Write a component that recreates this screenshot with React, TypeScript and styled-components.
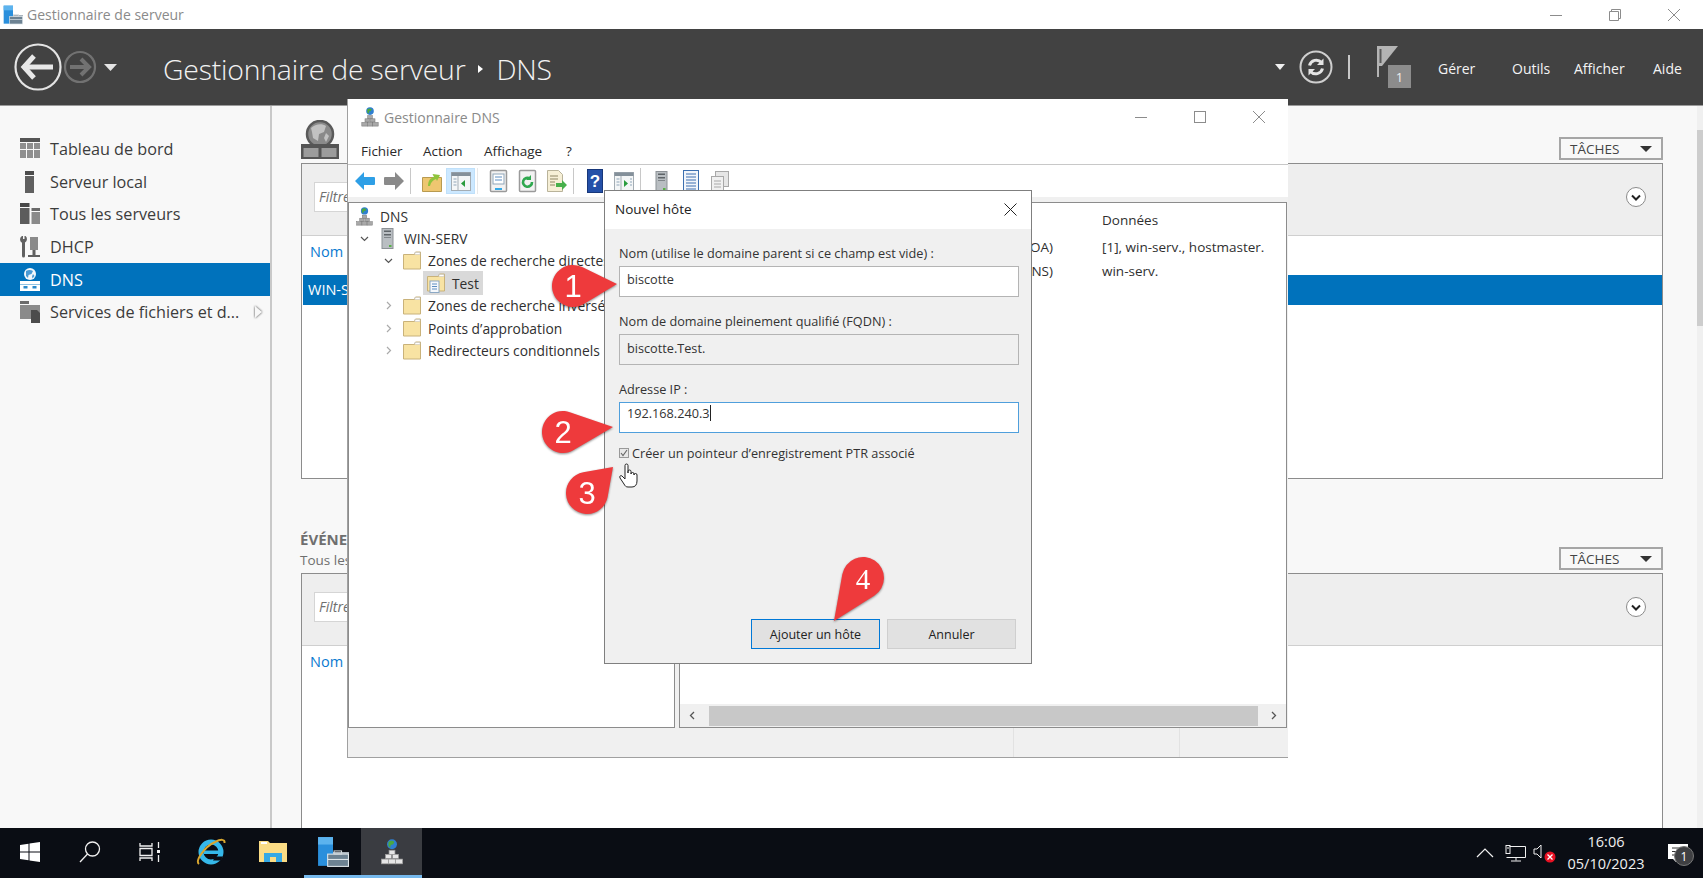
import React from 'react';
import styled, { createGlobalStyle } from 'styled-components';

const FONT = `"Open Sans", "Noto Sans", "Liberation Sans", sans-serif`;

const GlobalStyle = createGlobalStyle`
  html, body {
    margin: 0;
    padding: 0;
    overflow: hidden;
  }
  body {
    font-family: ${FONT};
    background: #f8f8f8;
  }
  * {
    box-sizing: border-box;
  }
`;

const Desktop = styled.div`
  position: relative;
  width: 1703px;
  height: 878px;
  display: flex;
  flex-direction: column;
  overflow: hidden;
`;

/* ---------- icons ---------- */

const ServerManagerIcon: React.FC<{ size: number }> = ({ size }) => (
  <svg width={size} height={size} viewBox="0 0 30 30">
    <rect x="1" y="1" width="14" height="27" fill="#2a8fdc" />
    <rect x="1" y="1" width="14" height="7" fill="#5cb3ee" />
    <rect x="15" y="15" width="15" height="2" fill="#aab4bc" />
    <rect x="10" y="17" width="19.5" height="11.5" fill="#6d8292" stroke="#dfe6ea" />
    <rect x="16" y="14" width="7" height="3" fill="none" stroke="#cfd6da" />
    <rect x="10" y="21.5" width="19.5" height="1" fill="#dfe6ea" />
  </svg>
);

const DnsIcon: React.FC<{ size: number; light?: boolean }> = ({ size, light }) => {
  const block = light ? '#e6e6e6' : '#a9a9a9';
  const edge = light ? '#9a9a9a' : '#777';
  return (
    <svg width={size} height={size} viewBox="0 0 20 22">
      <circle cx="10" cy="4.5" r="4.2" fill="#2f7fd0" />
      <path d="M7 2.5c2-1.5 4-1 5 0l-1 2-2 .5-.5 2.5-1.5-1.5z" fill="#4ba83f" />
      <rect x="7.5" y="9.5" width="5" height="3.5" fill={block} stroke={edge} strokeWidth="0.6" />
      <rect x="4.5" y="13" width="5" height="3.5" fill={block} stroke={edge} strokeWidth="0.6" />
      <rect x="10.5" y="13" width="5" height="3.5" fill={block} stroke={edge} strokeWidth="0.6" />
      <rect x="1" y="17" width="6" height="4" fill={block} stroke={edge} strokeWidth="0.6" />
      <rect x="7" y="17" width="6" height="4" fill={block} stroke={edge} strokeWidth="0.6" />
      <rect x="13" y="17" width="6" height="4" fill={block} stroke={edge} strokeWidth="0.6" />
    </svg>
  );
};

const FolderIcon: React.FC<{ doc?: boolean }> = ({ doc }) => (
  <svg width="18" height="20" viewBox="0 0 18 20">
    <path d="M.5 3.5h11l1-2.5h5v17H.5z" fill="#f8e3a3" stroke="#c9b27a" />
    <rect x="12" y="1.5" width="5" height="2" fill="#fff" stroke="#bcbcbc" strokeWidth="0.5" />
    {doc && (
      <g>
        <rect x="3" y="8" width="9" height="11.5" fill="#f5f8fc" stroke="#8ba8c4" />
        <path d="M5 11h5M5 13.5h5M5 16h5" stroke="#5c8ec2" />
      </g>
    )}
  </svg>
);

const ServerTower: React.FC = () => (
  <svg width="14" height="21" viewBox="0 0 14 21">
    <rect x="1" y="0.5" width="11" height="20" fill="#b9bec2" stroke="#8c9196" />
    <rect x="3" y="2.5" width="7" height="1.5" fill="#5f6468" />
    <rect x="3" y="6" width="7" height="1.5" fill="#5f6468" />
    <rect x="3" y="9" width="7" height="1" fill="#80868a" />
    <rect x="8" y="17" width="2.5" height="2" fill="#58b047" />
  </svg>
);

const Chevron: React.FC<{ open?: boolean }> = ({ open }) => (
  <svg width="9" height="9" viewBox="0 0 9 9">
    <path
      d={open ? 'M1 3l3.5 3.5L8 3' : 'M3 1l3.5 3.5L3 8'}
      fill="none"
      stroke={open ? '#555' : '#aaa'}
      strokeWidth="1.2"
    />
  </svg>
);

const WinGlyph: React.FC<{ kind: 'min' | 'max' | 'restore' | 'close'; color?: string }> = ({
  kind,
  color = '#8c8c8c',
}) => (
  <svg width="14" height="14" viewBox="0 0 14 14" fill="none" stroke={color} strokeWidth="1">
    {kind === 'min' && <path d="M1 7.5h12" />}
    {kind === 'max' && <rect x="1.5" y="1.5" width="11" height="11" />}
    {kind === 'restore' && <path d="M1.5 3.5h9v9h-9zM3.5 3.5v-2h9v9h-2" />}
    {kind === 'close' && <path d="M1 1l12 12M13 1L1 13" />}
  </svg>
);

const TILE_GLYPHS: Record<string, React.ReactNode> = {
  dashboard: (
    <g fill="#8f8f8f">
      <rect x="0" y="0" width="20" height="4" fill="#555" />
      <rect x="0" y="5" width="6" height="6" />
      <rect x="7" y="5" width="6" height="6" />
      <rect x="14" y="5" width="6" height="6" />
      <rect x="0" y="12" width="6" height="8" />
      <rect x="7" y="12" width="6" height="8" />
      <rect x="14" y="12" width="6" height="8" />
    </g>
  ),
  local: (
    <g fill="#606060">
      <rect x="5" y="0" width="9" height="4" fill="#4c4c4c" />
      <rect x="5" y="5" width="9" height="17" />
    </g>
  ),
  all: (
    <g fill="#5c5c5c">
      <rect x="0" y="0" width="9.5" height="4" fill="#484848" />
      <rect x="0" y="5" width="9.5" height="16" />
      <rect x="11.5" y="5" width="8.5" height="3" fill="#6a6a6a" />
      <rect x="11.5" y="9" width="8.5" height="12" fill="#8a8a8a" />
    </g>
  ),
  dhcp: (
    <g fill="#606060">
      <path d="M2 0h1v3h1.500V0h1a4 4 0 0 1-.5 6.500H5V20a1.500 1.500 0 0 1-3 0V6.500h-.5A4 4 0 0 1 2 0z" />
      <rect x="10" y="1" width="8" height="13" fill="#8a8a8a" />
      <rect x="12.500" y="14" width="3" height="5" />
      <rect x="8" y="19" width="12" height="2" />
    </g>
  ),
  files: (
    <g fill="#8a8a8a">
      <rect x="0" y="0" width="9" height="3" fill="#6c6c6c" />
      <rect x="0" y="4" width="20" height="14" />
      <path d="M11 9h6l3 3v10h-9z" fill="#4c4c4c" />
    </g>
  ),
};

const NavGlyph: React.FC<{ name: string }> = ({ name }) => (
  <svg width="20" height="22" viewBox="0 0 20 22">
    {TILE_GLYPHS[name]}
  </svg>
);

const DnsNavGlyph: React.FC = () => (
  <svg width="20" height="23" viewBox="0 0 20 23">
    <circle cx="10" cy="6" r="6" fill="#f2f7fb" />
    <path d="M6 3c2-1.500 5-1.500 7 0l-1.500 3-3 1-.5 3-2-2z" fill="#4a9ad4" />
    <path d="M13 6l1.500 2-2 2.500-.5-2z" fill="#4a9ad4" />
    <rect x="0" y="13" width="20" height="10" fill="#fff" />
    <rect x="0" y="16" width="20" height="1" fill="#8fc2e4" />
    <rect x="3.500" y="18" width="4" height="2.500" fill="#2b8acb" />
    <rect x="12.500" y="18" width="4" height="2.500" fill="#2b8acb" />
  </svg>
);

/* ---------- top of the server manager ---------- */

const TitleBar = styled.div`
  height: 29px;
  background: #fff;
  display: flex;
  align-items: center;
  padding-left: 3px;
  flex-shrink: 0;
`;

const TitleText = styled.span`
  margin-left: 4px;
  font-size: 14px;
  color: #8a8a8a;
`;

const WindowButtons = styled.div`
  margin-left: auto;
  display: flex;
`;

const WindowButton = styled.div`
  width: 59px;
  height: 29px;
  display: flex;
  align-items: center;
  justify-content: center;
`;

const HeaderBar = styled.div`
  height: 77px;
  background: #424242;
  border-bottom: 1px solid #9a9a9a;
  display: flex;
  align-items: center;
  padding-left: 13px;
  color: #fff;
  flex-shrink: 0;
`;

const Breadcrumb = styled.div`
  margin-left: 46px;
  padding-top: 3px;
  display: flex;
  align-items: center;
  font-size: 28.4px;
  font-weight: 300;
  color: #f2f2f2;
  letter-spacing: -0.2px;
`;

const Crumb = styled.span`
  margin: 0 14px 0 12px;
  width: 0;
  height: 0;
  border-left: 5px solid #fff;
  border-top: 4.5px solid transparent;
  border-bottom: 4.5px solid transparent;
`;

const HeaderTools = styled.div`
  margin-left: auto;
  display: flex;
  align-items: center;
`;

const DropCaret = styled.span`
  width: 0;
  height: 0;
  border-top: 6px solid #f0f0f0;
  border-left: 5.5px solid transparent;
  border-right: 5.5px solid transparent;
`;

const RefreshCircle = styled.svg`
  margin-left: 13px;
`;

const HeaderPipe = styled.span`
  width: 2px;
  height: 24px;
  background: #c8c8c8;
  margin: 0 26px 0 14px;
`;

const FlagBox = styled.div`
  position: relative;
  width: 36px;
  height: 44px;
`;

const FlagBadge = styled.span`
  position: absolute;
  left: 12px;
  top: 20px;
  width: 23px;
  height: 23px;
  background: #8c8c8c;
  color: #eee;
  font-size: 13px;
  display: flex;
  align-items: center;
  justify-content: center;
`;

const HeaderMenu = styled.nav`
  display: flex;
  align-items: center;
  margin-left: 26px;
  padding-top: 2px;
  font-size: 14px;
  color: #f4f4f4;
`;

const HeaderMenuItem = styled.span<{ $width: number }>`
  width: ${({ $width }) => $width}px;
`;

/* ---------- body: sidebar and tiles ---------- */

const Body = styled.div`
  flex: 1;
  display: flex;
  min-height: 0;
`;

const Sidebar = styled.aside`
  width: 272px;
  flex-shrink: 0;
  background: #f8f8f8;
  border-right: 2px solid #c9c9c9;
  padding-top: 27px;
`;

const NavItem = styled.div<{ $active?: boolean }>`
  height: 32.6px;
  display: flex;
  align-items: center;
  padding-left: 20px;
  gap: 10px;
  font-size: 16.2px;
  color: ${({ $active }) => ($active ? '#fff' : '#3c3c3c')};
  background: ${({ $active }) => ($active ? '#0072bc' : 'transparent')};
`;

const NavArrow = styled.span`
  margin-left: 6px;
  width: 0;
  height: 0;
  border-left: 7px solid #f8f8f8;
  border-top: 6px solid transparent;
  border-bottom: 6px solid transparent;
  filter: drop-shadow(0 0 1px #333);
`;

const Main = styled.main`
  flex: 1;
  display: flex;
  min-width: 0;
  background: #f8f8f8;
`;

const MainContent = styled.div`
  flex: 1;
  min-width: 0;
  padding: 0 34px 0 29px;
  display: flex;
  flex-direction: column;
`;

const ScrollTrack = styled.div`
  width: 6px;
  background: #f0f0f0;
  padding-top: 24px;
`;

const ScrollThumb = styled.div`
  height: 196px;
  background: #cdcdcd;
`;

const SectionHead = styled.div<{ $height: number }>`
  height: ${({ $height }) => $height}px;
  display: flex;
  align-items: flex-end;
  justify-content: space-between;
  flex-shrink: 0;
`;

const RoleIcon = styled.svg`
  margin-bottom: 4px;
`;

const EventTitle = styled.div`
  font-size: 15px;
  font-weight: 700;
  color: #6f6f6f;
  margin: 0 0 4px -1px;
  line-height: 18px;
`;

const EventSub = styled.div`
  margin-top: 3px;
  font-size: 13.5px;
  font-weight: 400;
  color: #6f6f6f;
`;

const TasksButton = styled.div`
  width: 104px;
  height: 23px;
  margin-bottom: 3px;
  border: 2px solid #a6a6a6;
  background: #f8f8f8;
  display: flex;
  align-items: center;
  justify-content: space-between;
  padding: 0 9px;
  font-size: 13.5px;
  color: #444;
`;

const TasksCaret = styled.span`
  width: 0;
  height: 0;
  border-top: 6px solid #333;
  border-left: 6px solid transparent;
  border-right: 6px solid transparent;
`;

const Tile = styled.section<{ $height?: number }>`
  border: 1px solid #8c8c8c;
  border-bottom-width: ${({ $height }) => ($height ? '1px' : '0')};
  background: #fff;
  height: ${({ $height }) => ($height ? `${$height}px` : 'auto')};
  flex: ${({ $height }) => ($height ? '0 0 auto' : '1')};
`;

const TileHeader = styled.div`
  height: 72px;
  background: #eeeeee;
  border-bottom: 1px solid #cfcfcf;
  display: flex;
  align-items: center;
  justify-content: space-between;
  padding: 0 16px 5px 12px;
`;

const FilterBox = styled.div`
  width: 200px;
  height: 30px;
  background: #fff;
  border: 1px solid #d5d5d5;
  padding: 0 4px;
  line-height: 28px;
  font-size: 14px;
  font-style: italic;
  color: #6f6f6f;
`;

const ColumnHead = styled.div`
  height: 39px;
  padding-left: 8px;
  line-height: 32px;
  font-size: 14.5px;
  color: #0a7ad0;
`;

const SelectedRow = styled.div`
  height: 30px;
  margin-left: 1px;
  padding-left: 5px;
  background: #0072bc;
  color: #fff;
  font-size: 14.5px;
  line-height: 30px;
`;

const ExpandCircle: React.FC = () => (
  <svg width="20" height="20" viewBox="0 0 20 20">
    <circle cx="10" cy="10" r="9.5" fill="#fff" stroke="#8a8a8a" />
    <path d="M6 8.5l4 4 4-4" fill="none" stroke="#222" strokeWidth="2" />
  </svg>
);

/* ---------- DNS manager window ---------- */

const DnsWindow = styled.div`
  position: absolute;
  left: 347px;
  top: 99px;
  width: 941px;
  height: 659px;
  display: flex;
  flex-direction: column;
  background: #f0f0f0;
  border-bottom: 1px solid #a0a0a0;
  border-left: 1px solid #a0a0a0;
`;

const DnsTitle = styled.div`
  height: 38px;
  background: #fff;
  display: flex;
  align-items: center;
  padding: 0 0 2px 12px;
  flex-shrink: 0;
`;

const DnsTitleText = styled.span`
  margin-left: 4px;
  font-size: 14px;
  color: #8a8a8a;
`;

const DnsWindowButtons = styled.div`
  margin-left: auto;
  display: flex;
`;

const DnsWindowButton = styled.div`
  width: 59px;
  height: 36px;
  display: flex;
  align-items: center;
  justify-content: center;
`;

const MenuBar = styled.div`
  height: 28px;
  background: #fff;
  border-bottom: 1px solid #c8c8c8;
  display: flex;
  align-items: center;
  padding-left: 13px;
  font-size: 13.5px;
  color: #2a2a2a;
  flex-shrink: 0;
`;

const MenuItem = styled.span<{ $width: number }>`
  width: ${({ $width }) => $width}px;
`;

const Toolbar = styled.div`
  height: 32px;
  background: #fff;
  display: flex;
  align-items: center;
  padding-left: 2px;
  flex-shrink: 0;
`;

const ToolGap = styled.div`
  height: 5px;
  background: #f0f0f0;
  flex-shrink: 0;
`;

const ToolButton = styled.div<{ $active?: boolean }>`
  width: 29px;
  height: 26px;
  display: flex;
  align-items: center;
  justify-content: center;
  background: ${({ $active }) => ($active ? '#cce8ff' : 'transparent')};
  border: 1px solid ${({ $active }) => ($active ? '#bfe0fa' : 'transparent')};
`;

const ToolSep = styled.span<{ $faint?: boolean }>`
  width: 1px;
  height: 26px;
  background: ${({ $faint }) => ($faint ? '#e8e8e8' : '#c8c8c8')};
  margin: 0 6px 0 2px;
`;

const HelpMark = styled.text`
  font-family: "Liberation Sans", sans-serif;
  font-size: 17px;
  font-weight: 700;
  fill: #fff;
  text-anchor: middle;
`;

const Panes = styled.div`
  flex: 1;
  display: flex;
  gap: 4px;
  min-height: 0;
  padding-right: 1px;
`;

const TreePane = styled.div`
  width: 327px;
  background: #fff;
  border: 1px solid #8c8c8c;
  padding-top: 2px;
  font-size: 13.8px;
  color: #2f2f2f;
  overflow: hidden;
`;

const TreeRow = styled.div<{ $indent: number }>`
  height: 22.4px;
  display: flex;
  align-items: center;
  padding-left: ${({ $indent }) => $indent}px;
  white-space: nowrap;
`;

const TreeChevron = styled.span`
  width: 18px;
  flex-shrink: 0;
  display: flex;
  justify-content: center;
`;

const TreeNode = styled.span<{ $selected?: boolean }>`
  margin-left: 2px;
  padding: 0 4px;
  height: 24px;
  display: flex;
  align-items: center;
  gap: 7px;
  background: ${({ $selected }) => ($selected ? '#d9d9d9' : 'transparent')};
`;

const TreeIconSlot = styled.span`
  width: 18px;
  flex-shrink: 0;
  display: flex;
  justify-content: center;
`;

const ListPane = styled.div`
  flex: 1;
  min-width: 0;
  background: #fff;
  border: 1px solid #8c8c8c;
  display: flex;
  flex-direction: column;
`;

const ListBody = styled.div`
  flex: 1;
  padding-top: 5px;
  font-size: 13.5px;
  color: #2f2f2f;
`;

const ListRow = styled.div<{ $header?: boolean }>`
  height: 24px;
  margin-bottom: ${({ $header }) => ($header ? '3px' : '0')};
  display: flex;
  align-items: center;
  white-space: nowrap;
`;

const TypeCell = styled.span`
  width: 373px;
  text-align: right;
`;

const DataCell = styled.span`
  margin-left: 49px;
`;

const HScroll = styled.div`
  height: 23px;
  background: #f0f0f0;
  display: flex;
  align-items: center;
  justify-content: space-between;
  padding: 0 9px;
`;

const HThumb = styled.div`
  flex: 1;
  height: 20px;
  margin: 0 13px 0 14px;
  background: #c8c8c8;
`;

const StatusBar = styled.div`
  height: 29px;
  display: flex;
  justify-content: flex-end;
  flex-shrink: 0;
`;

const StatusCell = styled.div<{ $width: number }>`
  width: ${({ $width }) => $width}px;
  border-left: 1px solid #e2e2e2;
`;

/* ---------- new host dialog ---------- */

const Dialog = styled.div`
  position: absolute;
  left: 604px;
  top: 190px;
  width: 428px;
  height: 474px;
  background: #f0f0f0;
  border: 1px solid #7f7f7f;
  display: flex;
  flex-direction: column;
`;

const DialogHeader = styled.div`
  height: 38px;
  background: #fff;
  display: flex;
  align-items: center;
  justify-content: space-between;
  padding: 0 14px 2px 10px;
  font-size: 13.5px;
  color: #222;
  flex-shrink: 0;
`;

const DialogBody = styled.div`
  flex: 1;
  display: flex;
  flex-direction: column;
  padding: 16px 12px 14px 14px;
`;

const FieldLabel = styled.div`
  height: 16px;
  line-height: 16px;
  font-size: 12.7px;
  color: #333;
  white-space: nowrap;
`;

const FieldInput = styled.div<{ $state?: 'focus' | 'readonly' }>`
  height: 31px;
  margin: 5px 0 16px;
  padding: ${({ $state }) => ($state === 'readonly' ? '5px' : $state === 'focus' ? '2px' : '4px')} 7px;
  font-size: 12.7px;
  line-height: 16px;
  color: #333;
  background: ${({ $state }) => ($state === 'readonly' ? '#f0f0f0' : '#fff')};
  border: 1px solid ${({ $state }) => ($state === 'focus' ? '#4f9fdc' : '#b4b4b4')};
`;

const Caret = styled.span`
  display: inline-block;
  width: 1px;
  height: 16px;
  background: #222;
  vertical-align: -3px;
`;

const CheckRow = styled.div`
  margin-top: -5px;
  display: flex;
  align-items: center;
  gap: 3px;
  font-size: 12.7px;
  color: #333;
`;

const CheckBox = styled.span`
  width: 10px;
  height: 10px;
  border: 1px solid #999;
  background: #e8e8e8;
  display: flex;
`;

const DialogFooter = styled.div`
  margin-top: auto;
  display: flex;
  justify-content: flex-end;
  gap: 7px;
  padding-right: 3px;
`;

const DialogButton = styled.div<{ $primary?: boolean }>`
  width: 129px;
  height: 30px;
  display: flex;
  align-items: center;
  justify-content: center;
  background: #e1e1e1;
  border: 1px solid ${({ $primary }) => ($primary ? '#0078d7' : '#cfcfcf')};
  font-size: 12.5px;
  color: #222;
`;

/* ---------- callouts ---------- */

const PinSvg = styled.svg<{ $left: number; $top: number }>`
  position: absolute;
  left: ${({ $left }) => $left}px;
  top: ${({ $top }) => $top}px;
  overflow: visible;
  filter: drop-shadow(0 1px 1px rgba(0, 0, 0, 0.45));
`;

const PinNumber = styled.text<{ $serif?: boolean }>`
  font-family: ${({ $serif }) => ($serif ? '"Liberation Serif", serif' : '"Liberation Sans", sans-serif')};
  font-size: ${({ $serif }) => ($serif ? 29 : 31)}px;
  fill: #fff;
  text-anchor: middle;
`;

const Callout: React.FC<{
  label: string;
  cx: number;
  cy: number;
  tipX: number;
  tipY: number;
  serif?: boolean;
}> = ({ label, cx, cy, tipX, tipY, serif }) => {
  const r = 21;
  const dx = tipX - cx;
  const dy = tipY - cy;
  const d = Math.hypot(dx, dy);
  const base = Math.atan2(dy, dx);
  const a = Math.acos(r / d);
  const p1 = [r * Math.cos(base - a), r * Math.sin(base - a)];
  const p2 = [r * Math.cos(base + a), r * Math.sin(base + a)];
  const path = `M${dx} ${dy}L${p2[0]} ${p2[1]}A${r} ${r} 0 1 1 ${p1[0]} ${p1[1]}Z`;
  return (
    <PinSvg $left={cx} $top={cy} width="1" height="1">
      <path d={path} fill="#ee3a3c" />
      <PinNumber x="0" y="10.5" $serif={serif}>
        {label}
      </PinNumber>
    </PinSvg>
  );
};

const HandCursor = styled.svg`
  position: absolute;
  left: 619px;
  top: 463px;
`;

/* ---------- taskbar ---------- */

const Taskbar = styled.footer`
  position: relative;
  z-index: 5;
  height: 50px;
  background: #0a0d14;
  display: flex;
  align-items: stretch;
  flex-shrink: 0;
  color: #f0f0f0;
`;

const TaskSlot = styled.div<{ $width: number; $pressed?: boolean; $running?: boolean }>`
  width: ${({ $width }) => $width}px;
  display: flex;
  align-items: center;
  justify-content: center;
  background: ${({ $pressed }) => ($pressed ? '#3a3c41' : 'transparent')};
  border-bottom: 3px solid ${({ $running }) => ($running ? '#76b9ed' : 'transparent')};
`;

const Tray = styled.div`
  margin-left: auto;
  display: flex;
  align-items: center;
`;

const TrayIcon = styled.div<{ $width: number }>`
  width: ${({ $width }) => $width}px;
  display: flex;
  justify-content: center;
  position: relative;
`;

const Clock = styled.div`
  width: 94px;
  text-align: center;
  font-size: 14.5px;
  line-height: 22px;
`;

const NotifyBadge = styled.span`
  position: absolute;
  left: 21px;
  top: 2px;
  width: 20px;
  height: 20px;
  border-radius: 50%;
  background: #3f4043;
  border: 1px solid #777;
  color: #fff;
  font-size: 12px;
  display: flex;
  align-items: center;
  justify-content: center;
`;

/* ---------- toolbar icon set ---------- */

const ArrowTool: React.FC<{ color: string; flip?: boolean }> = ({ color, flip }) => (
  <svg width="22" height="20" viewBox="0 0 22 20">
    <g transform={flip ? 'matrix(-1 0 0 1 22 0)' : undefined}>
      <path d="M1 10l9-9v5h10a1 1 0 0 1 1 1v6a1 1 0 0 1-1 1H10v5z" fill={color} />
    </g>
  </svg>
);

const PageTool: React.FC<{ children?: React.ReactNode }> = ({ children }) => (
  <svg width="20" height="24" viewBox="0 0 20 24">
    <rect x="1.5" y="1.5" width="16" height="21" rx="1" fill="#f2f2f2" stroke="#9a9a9a" strokeWidth="1.5" />
    {children}
  </svg>
);

const SplitTool: React.FC<{ right?: boolean }> = ({ right }) => (
  <svg width="20" height="19" viewBox="0 0 20 19">
    <rect x="0.5" y="0.5" width="19" height="18" fill="#f4f6f7" stroke="#a4adb4" />
    <rect x="0.5" y="0.5" width="19" height="3.500" fill="#84909a" />
    <path d="M7 4v14" stroke="#a4adb4" />
    {right ? (
      <path d="M10 8v7l4-3.500z" fill="#2a9c3e" />
    ) : (
      <path d="M14 8v7l-4-3.500z" fill="#2a9c3e" />
    )}
    <path d="M2.500 7h3M2.500 10h3M2.500 13h3" stroke="#8fa5b8" />
    {right && <path d="M16 7h2M16 10h2M16 13h2" stroke="#8fa5b8" />}
  </svg>
);

const App: React.FC = () => (
  <Desktop>
    <GlobalStyle />
    <TitleBar>
      <ServerManagerIcon size={20} />
      <TitleText>Gestionnaire de serveur</TitleText>
      <WindowButtons>
        <WindowButton>
          <WinGlyph kind="min" />
        </WindowButton>
        <WindowButton>
          <WinGlyph kind="restore" />
        </WindowButton>
        <WindowButton>
          <WinGlyph kind="close" />
        </WindowButton>
      </WindowButtons>
    </TitleBar>

    <HeaderBar>
      <svg width="104" height="52" viewBox="0 0 104 52">
        <circle cx="25" cy="26" r="22.500" fill="none" stroke="#e4e4e4" strokeWidth="2.200" />
        <path d="M10 26h30" stroke="#e8e8e8" strokeWidth="5" />
        <path d="M21 15L11 26l10 11" fill="none" stroke="#e8e8e8" strokeWidth="5" />
        <circle cx="67" cy="26" r="15" fill="none" stroke="#727272" strokeWidth="2.200" />
        <path d="M57 26h18" stroke="#727272" strokeWidth="4" />
        <path d="M68 18l8 8-8 8" fill="none" stroke="#727272" strokeWidth="4" />
        <path d="M91 23h13l-6.500 7z" fill="#e4e4e4" />
      </svg>
      <Breadcrumb>
        Gestionnaire de serveur
        <Crumb />
        DNS
      </Breadcrumb>
      <HeaderTools>
        <DropCaret />
        <RefreshCircle width="36" height="36" viewBox="0 0 36 36">
          <circle cx="18" cy="18" r="15.500" fill="none" stroke="#cfcfcf" strokeWidth="2" />
          <path d="M11.500 16.500a7 7 0 0 1 12-3" fill="none" stroke="#e4e4e4" strokeWidth="3" />
          <path d="M25.500 9.500v6.500h-6.500z" fill="#e4e4e4" />
          <path d="M24.500 19.500a7 7 0 0 1-12 3" fill="none" stroke="#e4e4e4" strokeWidth="3" />
          <path d="M10.500 26.500V20h6.500z" fill="#e4e4e4" />
        </RefreshCircle>
        <HeaderPipe />
        <FlagBox>
          <svg width="24" height="32" viewBox="0 0 24 32">
            <path d="M1 1h2v31H1z" fill="#b4b4b4" />
            <path d="M3 1h19L6 21H3z" fill="#b4b4b4" />
            <path d="M3.500 4h2v14h-2z" fill="#5a5a5a" />
          </svg>
          <FlagBadge>1</FlagBadge>
        </FlagBox>
        <HeaderMenu>
          <HeaderMenuItem $width={74}>Gérer</HeaderMenuItem>
          <HeaderMenuItem $width={62}>Outils</HeaderMenuItem>
          <HeaderMenuItem $width={79}>Afficher</HeaderMenuItem>
          <HeaderMenuItem $width={50}>Aide</HeaderMenuItem>
        </HeaderMenu>
      </HeaderTools>
    </HeaderBar>

    <Body>
      <Sidebar>
        <NavItem>
          <NavGlyph name="dashboard" />
          Tableau de bord
        </NavItem>
        <NavItem>
          <NavGlyph name="local" />
          Serveur local
        </NavItem>
        <NavItem>
          <NavGlyph name="all" />
          Tous les serveurs
        </NavItem>
        <NavItem>
          <NavGlyph name="dhcp" />
          DHCP
        </NavItem>
        <NavItem $active>
          <DnsNavGlyph />
          DNS
        </NavItem>
        <NavItem>
          <NavGlyph name="files" />
          Services de fichiers et d...
          <NavArrow />
        </NavItem>
      </Sidebar>
      <Main>
        <MainContent>
          <SectionHead $height={57}>
            <RoleIcon width="38" height="39" viewBox="0 0 38 39">
              <circle cx="19" cy="14" r="13" fill="#8a8a8a" stroke="#5a5a5a" strokeWidth="2.500" />
              <path d="M10 8c4-4 11-5 15-2l-2 6-5 2-1 7-5-3-1-6z" fill="#c2c2c2" />
              <path d="M25 13l3 3-3 6-2-4z" fill="#c2c2c2" />
              <rect x="0" y="24" width="38" height="15" fill="#555" />
              <rect x="2.500" y="28" width="15" height="9" fill="#9c9c9c" />
              <rect x="20.500" y="28" width="15" height="9" fill="#9c9c9c" />
            </RoleIcon>
            <TasksButton>
              TÂCHES
              <TasksCaret />
            </TasksButton>
          </SectionHead>
          <Tile $height={316}>
            <TileHeader>
              <FilterBox>Filtre</FilterBox>
              <ExpandCircle />
            </TileHeader>
            <ColumnHead>Nom</ColumnHead>
            <SelectedRow>WIN-SERV</SelectedRow>
          </Tile>
          <SectionHead $height={94}>
            <EventTitle>
              ÉVÉNEMENTS
              <EventSub>Tous les événements</EventSub>
            </EventTitle>
            <TasksButton>
              TÂCHES
              <TasksCaret />
            </TasksButton>
          </SectionHead>
          <Tile>
            <TileHeader>
              <FilterBox>Filtre</FilterBox>
              <ExpandCircle />
            </TileHeader>
            <ColumnHead>Nom</ColumnHead>
          </Tile>
        </MainContent>
        <ScrollTrack>
          <ScrollThumb />
        </ScrollTrack>
      </Main>
    </Body>

    <Taskbar>
      <TaskSlot $width={60}>
        <svg width="20" height="20" viewBox="0 0 20 20" fill="#fff">
          <path d="M0 3l8.500-1.200v7.700H0zM9.500 1.600L20 0v9.500H9.500zM0 10.500h8.500v7.700L0 17zM9.500 10.500H20V20L9.500 18.400z" />
        </svg>
      </TaskSlot>
      <TaskSlot $width={60}>
        <svg width="22" height="22" viewBox="0 0 22 22" fill="none" stroke="#f0f0f0" strokeWidth="1.300">
          <circle cx="13.500" cy="8" r="7" />
          <path d="M8.500 13L1 21" />
        </svg>
      </TaskSlot>
      <TaskSlot $width={60}>
        <svg width="22" height="20" viewBox="0 0 22 20" fill="none" stroke="#f0f0f0" strokeWidth="1.300">
          <path d="M1 1v3h12V1M1 19v-3h12v3M1 6.500h12v7H1zM19.500 0v6M19.500 13v7" />
          <rect x="18" y="8" width="3" height="3" fill="#f0f0f0" stroke="none" />
        </svg>
      </TaskSlot>
      <TaskSlot $width={62}>
        <svg width="30" height="30" viewBox="0 0 30 30">
          <circle cx="15" cy="15" r="10" fill="none" stroke="#35b8ea" strokeWidth="5" />
          <rect x="8" y="13.500" width="15" height="3.500" fill="#35b8ea" />
          <path d="M19 19.500l8 0-2 4-8 0z" fill="#0a0d14" />
          <path
            d="M3 27c-4-3 5-17 16-22 6-3 10-3 9.500 1"
            fill="none"
            stroke="#d9a730"
            strokeWidth="2"
          />
        </svg>
      </TaskSlot>
      <TaskSlot $width={62}>
        <svg width="28" height="24" viewBox="0 0 28 24">
          <path d="M0 1h9l2 2h17v19H0z" fill="#fbdc85" />
          <path d="M2 2h6v2H2z" fill="#fff" />
          <path d="M5 22v-9h18v9h-6v-5h-6v5z" fill="#35a9e6" />
        </svg>
      </TaskSlot>
      <TaskSlot $width={57} $running>
        <ServerManagerIcon size={32} />
      </TaskSlot>
      <TaskSlot $width={61} $pressed $running>
        <DnsIcon size={26} light />
      </TaskSlot>
      <Tray>
        <TrayIcon $width={30}>
          <svg width="18" height="10" viewBox="0 0 18 10" fill="none" stroke="#f0f0f0" strokeWidth="1.200">
            <path d="M1 9l8-8 8 8" />
          </svg>
        </TrayIcon>
        <TrayIcon $width={30}>
          <svg width="21" height="17" viewBox="0 0 21 17" fill="none" stroke="#f0f0f0">
            <path d="M4.500 1.500h16v11H1.500M11 12.500v3M6 16h10" />
            <rect x="1" y="0.500" width="4" height="8" />
            <path d="M2 3h2" />
          </svg>
        </TrayIcon>
        <TrayIcon $width={29}>
          <svg width="24" height="20" viewBox="0 0 24 20">
            <path d="M1 6h3l4-4v13l-4-4H1z" fill="none" stroke="#f0f0f0" />
            <circle cx="17" cy="14" r="5.500" fill="#e81123" />
            <path d="M14.500 11.500l5 5M19.500 11.500l-5 5" stroke="#fff" strokeWidth="1.300" />
          </svg>
        </TrayIcon>
        <Clock>
          16:06
          <br />
          05/10/2023
        </Clock>
        <TrayIcon $width={50}>
          <svg width="20" height="18" viewBox="0 0 20 18">
            <path d="M0 0h20v15H9l-1 3-3-3H0z" fill="#fff" />
            <path d="M4 4h12M4 7.500h12M4 11h8" stroke="#333" />
          </svg>
          <NotifyBadge>1</NotifyBadge>
        </TrayIcon>
      </Tray>
    </Taskbar>

    <DnsWindow>
      <DnsTitle>
        <DnsIcon size={20} />
        <DnsTitleText>Gestionnaire DNS</DnsTitleText>
        <DnsWindowButtons>
          <DnsWindowButton>
            <WinGlyph kind="min" />
          </DnsWindowButton>
          <DnsWindowButton>
            <WinGlyph kind="max" />
          </DnsWindowButton>
          <DnsWindowButton>
            <WinGlyph kind="close" />
          </DnsWindowButton>
        </DnsWindowButtons>
      </DnsTitle>
      <MenuBar>
        <MenuItem $width={62}>Fichier</MenuItem>
        <MenuItem $width={61}>Action</MenuItem>
        <MenuItem $width={82}>Affichage</MenuItem>
        <span>?</span>
      </MenuBar>
      <Toolbar>
        <ToolButton>
          <ArrowTool color="#2e9fe6" />
        </ToolButton>
        <ToolButton>
          <ArrowTool color="#8a8a8a" flip />
        </ToolButton>
        <ToolSep />
        <ToolButton>
          <svg width="20" height="22" viewBox="0 0 20 22">
            <path d="M.5 7.500h19v14H.5z" fill="#eec670" stroke="#b89a50" />
            <path d="M6 16c0-5 2-8 6-9l-1.500-3L18 5l-3 6-1-2c-3 1-5 3-6 7z" fill="#8fc43c" />
          </svg>
        </ToolButton>
        <ToolButton $active>
          <SplitTool />
        </ToolButton>
        <ToolSep $faint />
        <ToolButton>
          <PageTool>
            <rect x="4" y="5" width="11" height="10" fill="#fff" stroke="#8fa5b8" />
            <path d="M6 8h7M6 11h7" stroke="#5c8ec2" />
            <rect x="6" y="19" width="7" height="2" fill="#35a9e6" />
          </PageTool>
        </ToolButton>
        <ToolButton>
          <PageTool>
            <path d="M14 13a4.500 4.500 0 1 1-2-3.500" fill="none" stroke="#2fa84f" strokeWidth="2.600" />
            <path d="M13 6v5H8z" fill="#2fa84f" />
          </PageTool>
        </ToolButton>
        <ToolButton>
          <svg width="22" height="24" viewBox="0 0 22 24">
            <path d="M1.500 1.500h11l4 4v17h-15z" fill="#f6efd6" stroke="#b9b39a" />
            <path d="M4 7h8M4 10h8M4 13h5M4 16h5" stroke="#8f8664" />
            <path d="M10 14h6v-3l5 5-5 5v-3h-6z" fill="#47b04b" />
          </svg>
        </ToolButton>
        <ToolSep />
        <ToolButton>
          <svg width="16" height="24" viewBox="0 0 16 24">
            <rect x="0.500" y="0.500" width="15" height="23" fill="#2450a8" stroke="#17377a" />
            <HelpMark x="8" y="18">
              ?
            </HelpMark>
          </svg>
        </ToolButton>
        <ToolButton>
          <SplitTool right />
        </ToolButton>
        <ToolSep />
        <ToolButton>
          <ServerTower />
        </ToolButton>
        <ToolButton>
          <svg width="18" height="22" viewBox="0 0 18 22">
            <rect x="1.500" y="0.500" width="15" height="21" fill="#f2f6fb" stroke="#3c6fb0" />
            <path d="M4 4h10M4 7h10M4 10h10M4 13h10M4 16h10M4 19h10" stroke="#3c6fb0" />
          </svg>
        </ToolButton>
        <ToolButton>
          <svg width="18" height="20" viewBox="0 0 18 20">
            <rect x="4.500" y="0.500" width="13" height="15" fill="#e6e6e6" stroke="#a8a8a8" />
            <rect x="0.500" y="5.500" width="12" height="14" fill="#f0f0f0" stroke="#a8a8a8" />
            <path d="M3 10h7M3 13h7M3 16h7" stroke="#a8a8a8" />
          </svg>
        </ToolButton>
      </Toolbar>
      <ToolGap />
      <Panes>
        <TreePane>
          <TreeRow $indent={6}>
            <DnsIcon size={19} />
            <TreeNode>DNS</TreeNode>
          </TreeRow>
          <TreeRow $indent={6}>
            <TreeChevron>
              <Chevron open />
            </TreeChevron>
            <TreeNode>
              <TreeIconSlot>
                <ServerTower />
              </TreeIconSlot>
              WIN-SERV
            </TreeNode>
          </TreeRow>
          <TreeRow $indent={30}>
            <TreeChevron>
              <Chevron open />
            </TreeChevron>
            <TreeNode>
              <TreeIconSlot>
                <FolderIcon />
              </TreeIconSlot>
              Zones de recherche directes
            </TreeNode>
          </TreeRow>
          <TreeRow $indent={54}>
            <TreeChevron />
            <TreeNode $selected>
              <TreeIconSlot>
                <FolderIcon doc />
              </TreeIconSlot>
              Test
            </TreeNode>
          </TreeRow>
          <TreeRow $indent={30}>
            <TreeChevron>
              <Chevron />
            </TreeChevron>
            <TreeNode>
              <TreeIconSlot>
                <FolderIcon />
              </TreeIconSlot>
              Zones de recherche inversée
            </TreeNode>
          </TreeRow>
          <TreeRow $indent={30}>
            <TreeChevron>
              <Chevron />
            </TreeChevron>
            <TreeNode>
              <TreeIconSlot>
                <FolderIcon />
              </TreeIconSlot>
              Points d’approbation
            </TreeNode>
          </TreeRow>
          <TreeRow $indent={30}>
            <TreeChevron>
              <Chevron />
            </TreeChevron>
            <TreeNode>
              <TreeIconSlot>
                <FolderIcon />
              </TreeIconSlot>
              Redirecteurs conditionnels
            </TreeNode>
          </TreeRow>
        </TreePane>
        <ListPane>
          <ListBody>
            <ListRow $header>
              <TypeCell />
              <DataCell>Données</DataCell>
            </ListRow>
            <ListRow>
              <TypeCell>Source de nom (SOA)</TypeCell>
              <DataCell>[1], win-serv., hostmaster.</DataCell>
            </ListRow>
            <ListRow>
              <TypeCell>Serveur de noms (NS)</TypeCell>
              <DataCell>win-serv.</DataCell>
            </ListRow>
          </ListBody>
          <HScroll>
            <svg width="6" height="9" viewBox="0 0 6 9" fill="none" stroke="#555" strokeWidth="1.300">
              <path d="M5 1L1.500 4.500 5 8" />
            </svg>
            <HThumb />
            <svg width="6" height="9" viewBox="0 0 6 9" fill="none" stroke="#555" strokeWidth="1.300">
              <path d="M1 1l3.500 3.500L1 8" />
            </svg>
          </HScroll>
        </ListPane>
      </Panes>
      <StatusBar>
        <StatusCell $width={166} />
        <StatusCell $width={109} />
      </StatusBar>
    </DnsWindow>

    <Dialog>
      <DialogHeader>
        Nouvel hôte
        <svg width="13" height="13" viewBox="0 0 13 13" fill="none" stroke="#222" strokeWidth="1">
          <path d="M.5.500l12 12M12.500.500l-12 12" />
        </svg>
      </DialogHeader>
      <DialogBody>
        <FieldLabel>Nom (utilise le domaine parent si ce champ est vide) :</FieldLabel>
        <FieldInput>biscotte</FieldInput>
        <FieldLabel>Nom de domaine pleinement qualifié (FQDN) :</FieldLabel>
        <FieldInput $state="readonly">biscotte.Test.</FieldInput>
        <FieldLabel>Adresse IP :</FieldLabel>
        <FieldInput $state="focus">
          192.168.240.3
          <Caret />
        </FieldInput>
        <CheckRow>
          <CheckBox>
            <svg width="8" height="8" viewBox="0 0 8 8" fill="none" stroke="#666" strokeWidth="1.100">
              <path d="M1 4l2 2.500L7 1" />
            </svg>
          </CheckBox>
          Créer un pointeur d’enregistrement PTR associé
        </CheckRow>
        <DialogFooter>
          <DialogButton $primary>Ajouter un hôte</DialogButton>
          <DialogButton>Annuler</DialogButton>
        </DialogFooter>
      </DialogBody>
    </Dialog>

    <HandCursor width="20" height="26" viewBox="0 0 20 26">
      <path
        d="M6 12V2.500a1.500 1.500 0 0 1 3 0V10V8.500a1.500 1.500 0 0 1 3 0V11a1.500 1.500 0 0 1 3 0v1a1.500 1.500 0 0 1 3 0v6c0 4-2 6-5 6H9c-2 0-3-1-4-3l-4-6c-1-2 1-3 2-2l3 3z"
        fill="#fff"
        stroke="#222"
        strokeWidth="1"
      />
    </HandCursor>

    <Callout label="1" cx={573} cy={286} tipX={617} tipY={284} />
    <Callout label="2" cx={563} cy={432} tipX={613} tipY={427} />
    <Callout label="3" cx={587} cy={493} tipX={613} tipY={467} />
    <Callout label="4" cx={863} cy={578} tipX={834} tipY={621} serif />
  </Desktop>
);

export default App;
